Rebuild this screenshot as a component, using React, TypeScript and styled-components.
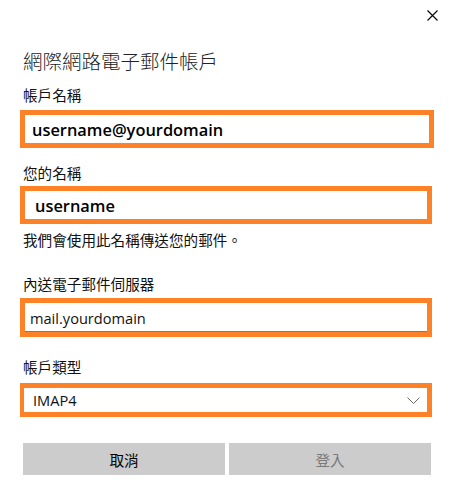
import styled, { createGlobalStyle } from 'styled-components';

const GlobalStyle = createGlobalStyle`
  html, body {
    margin: 0;
    padding: 0;
    background: #fff;
  }
  body {
    font-family: 'Open Sans', 'Noto Sans CJK TC', sans-serif;
    color: #000;
  }
`;

const cjk = `'Open Sans', 'Noto Sans CJK TC', sans-serif`;

export default function App() {
  return (
    <>
      <GlobalStyle />
      <Dialog>
        <Header>
          <CloseButton aria-label="close">
            <svg width="11" height="11" viewBox="0 0 11 11">
              <path d="M0.5 0.5 L10.5 10.5 M10.5 0.5 L0.5 10.5" stroke="#000" strokeWidth="1.1" />
            </svg>
          </CloseButton>
        </Header>

        <Title>網際網路電子郵件帳戶</Title>

        <Label $top={9} $bottom={5}>帳戶名稱</Label>
        <InputBox $width={414}>
          <BoldValue $left={7}>username@yourdomain</BoldValue>
        </InputBox>

        <Label $top={15} $bottom={3}>您的名稱</Label>
        <InputBox $width={412}>
          <BoldValue $left={10}>username</BoldValue>
        </InputBox>
        <Helper>我們會使用此名稱傳送您的郵件。</Helper>

        <Label $top={24} $bottom={4}>內送電子郵件伺服器</Label>
        <InputBox $width={412} $height={39} $underline>
          <PlainValue $left={5}>mail.yourdomain</PlainValue>
        </InputBox>

        <Label $top={20} $bottom={6}>帳戶類型</Label>
        <SelectBox>
          <PlainValue $left={9}>IMAP4</PlainValue>
          <svg width="13" height="7" viewBox="0 0 13 7">
            <path d="M0.5 0.5 L6.5 6.5 L12.5 0.5" stroke="#666" strokeWidth="1" fill="none" />
          </svg>
        </SelectBox>

        <ButtonRow>
          <Button>取消</Button>
          <Button $disabled>登入</Button>
        </ButtonRow>
      </Dialog>
    </>
  );
}

const Dialog = styled.div`
  width: 454px;
  height: 485px;
  box-sizing: border-box;
  padding: 0 0 0 20px;
  display: flex;
  flex-direction: column;
  align-items: flex-start;
`;

const Header = styled.div`
  width: 434px;
  height: 30px;
  display: flex;
  justify-content: flex-end;
  align-items: center;
`;

const CloseButton = styled.div`
  width: 11px;
  height: 11px;
  margin-right: 16px;
  display: flex;

  svg {
    display: block;
  }
`;

const Title = styled.h1`
  margin: 18px 0 0 3px;
  font-family: ${cjk};
  font-size: 19.5px;
  font-weight: 300;
  line-height: 28px;
  color: #222;
`;

const Label = styled.div<{ $top: number; $bottom: number }>`
  margin: ${(p) => p.$top}px 0 ${(p) => p.$bottom}px 3px;
  font-family: ${cjk};
  font-size: 14.6px;
  line-height: 20px;
  color: #111;
`;

const InputBox = styled.div<{ $width: number; $height?: number; $underline?: boolean }>`
  box-sizing: border-box;
  width: ${(p) => p.$width}px;
  height: ${(p) => p.$height ?? 38}px;
  border: 5px solid #fd8227;
  background: #fff;
  display: flex;
  align-items: center;
  box-shadow: ${(p) => (p.$underline ? 'inset 0 -1px 0 #7a7a7a' : 'none')};
`;

const SelectBox = styled.div`
  box-sizing: border-box;
  width: 412px;
  height: 34px;
  border: 5px solid #fd8227;
  border-left-width: 4px;
  background: #fff;
  display: flex;
  align-items: center;
  justify-content: space-between;
  padding-right: 7px;

  svg {
    display: block;
    margin-top: 1px;
  }
`;

const BoldValue = styled.span<{ $left: number }>`
  padding-left: ${(p) => p.$left}px;
  font-family: 'Open Sans', sans-serif;
  font-size: 16.4px;
  font-weight: 600;
  color: #000;
`;

const PlainValue = styled.span<{ $left: number }>`
  padding-left: ${(p) => p.$left}px;
  font-family: 'Open Sans', sans-serif;
  font-size: 14.6px;
  color: #111;
`;

const Helper = styled.div`
  margin: 6px 0 0 3px;
  font-family: ${cjk};
  font-size: 14.6px;
  line-height: 20px;
  color: #111;
`;

const ButtonRow = styled.div`
  margin: 26px 0 0 3px;
  width: 408px;
  display: grid;
  grid-template-columns: 1fr 1fr;
  gap: 4px;
`;

const Button = styled.div<{ $disabled?: boolean }>`
  height: 32px;
  background: #cccccc;
  display: flex;
  align-items: center;
  justify-content: center;
  font-family: ${cjk};
  font-size: 14.6px;
  color: ${(p) => (p.$disabled ? '#7a7a7a' : '#000')};
`;
